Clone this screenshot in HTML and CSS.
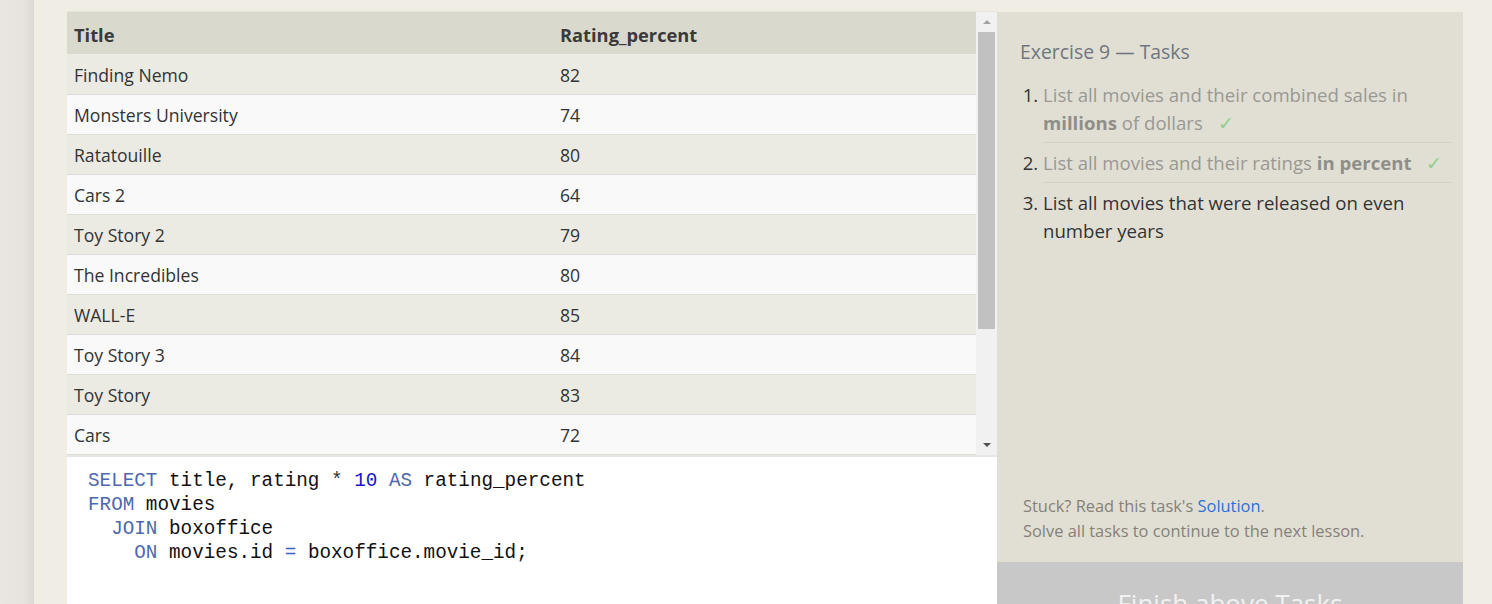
FILE: index.html
```html
<!DOCTYPE html>
<html>
<head>
<meta charset="utf-8">
<link rel="stylesheet" href="styles.css">
</head>
<body>
<div class="edge"></div>
<div class="page">
  <div class="workspace">
    <div class="results">
      <table class="grid">
        <thead>
          <tr><th class="c1">Title</th><th>Rating_percent</th></tr>
        </thead>
        <tbody>
          <tr><td>Finding Nemo</td><td>82</td></tr>
          <tr><td>Monsters University</td><td>74</td></tr>
          <tr><td>Ratatouille</td><td>80</td></tr>
          <tr><td>Cars 2</td><td>64</td></tr>
          <tr><td>Toy Story 2</td><td>79</td></tr>
          <tr><td>The Incredibles</td><td>80</td></tr>
          <tr><td>WALL-E</td><td>85</td></tr>
          <tr><td>Toy Story 3</td><td>84</td></tr>
          <tr><td>Toy Story</td><td>83</td></tr>
          <tr><td>Cars</td><td>72</td></tr>
        </tbody>
      </table>
      <div class="scrollbar">
        <div class="arrow up"></div>
        <div class="track"><div class="thumb"></div></div>
        <div class="arrow down"></div>
      </div>
    </div>
    <div class="editor">
<pre class="code"><span class="kw">SELECT</span> title, rating <span class="op">*</span> <span class="num">10</span> <span class="kw">AS</span> rating_percent
<span class="kw">FROM</span> movies
  <span class="kw">JOIN</span> boxoffice
    <span class="kw">ON</span> movies.id <span class="eq">=</span> boxoffice.movie_id;</pre>
    </div>
  </div>
  <div class="tasks">
    <div class="tasks-body">
      <h2 class="tasks-title">Exercise 9 — Tasks</h2>
      <ol class="task-list">
        <li class="task done">List all movies and their combined sales in <b>millions</b> of dollars <span class="check">✓</span></li>
        <li class="task done">List all movies and their ratings <b>in percent</b> <span class="check">✓</span></li>
        <li class="task current">List all movies that were released on even number years</li>
      </ol>
      <div class="spacer"></div>
      <p class="hint">Stuck? Read this task's <a class="link">Solution</a>.<br>Solve all tasks to continue to the next lesson.</p>
    </div>
    <div class="finish">Finish above Tasks</div>
  </div>
</div>
</body>
</html>
```
FILE: styles.css
```css
html, body {
  margin: 0;
  padding: 0;
  height: 100%;
  overflow: hidden;
}
body {
  display: flex;
  background: #f0ede5;
  font-family: "Open Sans", "Noto Sans", sans-serif;
}
.edge {
  width: 34px;
  flex: none;
  background: linear-gradient(to right, #eae7e3 0%, #e6e3de 70%, #dcd8d3 100%);
}
.page {
  flex: 1;
  display: flex;
  padding: 11px 0 0 33px;
}
.workspace {
  width: 930px;
  display: flex;
  flex-direction: column;
  background: #e8e6e0;
}
.results {
  height: 443px;
  display: flex;
  border-top: 1px solid #e6e4dd;
}
.grid {
  width: 909px;
  border-collapse: collapse;
  font-size: 17.6px;
  color: #333;
  align-self: flex-start;
}
.grid th {
  height: 42px;
  box-sizing: border-box;
  padding: 3px 7px 0 7px;
  text-align: left;
  font-weight: 700;
  font-size: 18.3px;
  background: #dad9ce;
  color: #3a3a3a;
}
.grid th.c1, .grid td:first-child {
  width: 486px;
  box-sizing: border-box;
}
.grid td {
  height: 40px;
  box-sizing: border-box;
  padding: 2px 7px 0 7px;
  border-bottom: 1px solid #dcdcd8;
}
.grid tbody tr:nth-child(odd) td { background: #ebeae3; }
.grid tbody tr:nth-child(even) td { background: #f9f9f9; }
.scrollbar {
  width: 21px;
  background: #f1f1f1;
  display: flex;
  flex-direction: column;
}
.arrow {
  height: 20px;
  display: flex;
  align-items: center;
  justify-content: center;
}
.arrow.up::before {
  content: "";
  border-left: 4px solid transparent;
  border-right: 4px solid transparent;
  border-bottom: 4px solid #a3a3a3;
}
.arrow.down::before {
  content: "";
  border-left: 4px solid transparent;
  border-right: 4px solid transparent;
  border-top: 4px solid #505050;
}
.track {
  flex: 1;
  padding: 0 2px;
}
.thumb {
  height: 297px;
  background: #c1c1c1;
}
.editor {
  flex: 1;
  margin-top: 2px;
  background: #fff;
  padding: 12px 0 0 21px;
}
.code {
  margin: 0;
  font-family: "Liberation Mono", "DejaVu Sans Mono", monospace;
  font-size: 19.3px;
  line-height: 24px;
  color: #111;
}
.kw { color: #4d68ad; }
.num { color: #1414c8; }
.eq { color: #3d5cc8; }
.op { color: #333; }
.tasks {
  width: 466px;
  display: flex;
  flex-direction: column;
  background: #e1dfd4;
  margin-top: 1px;
}
.tasks-body {
  flex: 1;
  display: flex;
  flex-direction: column;
  padding: 26px 11px 0 23px;
}
.tasks-title {
  margin: 0;
  font-size: 19.4px;
  font-weight: 400;
  color: #6f7680;
  line-height: 28px;
}
.task-list {
  margin: 9px 0 0 0;
  padding: 0 0 0 23px;
  font-size: 18.6px;
  line-height: 28px;
}
.task {
  padding: 6px 0 5px 0;
  border-bottom: 1px solid #d3d1c6;
}
.task:last-child { border-bottom: none; }
.task::marker { color: #333; }
.task.done { color: #999893; }
.task.done b { color: #8f8e89; }
.task.current { color: #333; }
.check {
  color: #8ed08e;
  margin-left: 10px;
}
.spacer { flex: 1; }
.hint {
  margin: 0 0 19px 3px;
  font-size: 16.4px;
  line-height: 25px;
  color: #85817a;
}
.link { color: #2d6fd8; }
.finish {
  height: 42px;
  box-sizing: border-box;
  background: #c8c8c8;
  color: #f2f2f2;
  font-size: 26px;
  text-align: center;
  padding-top: 21px;
  line-height: 40px;
  flex: none;
}
```
